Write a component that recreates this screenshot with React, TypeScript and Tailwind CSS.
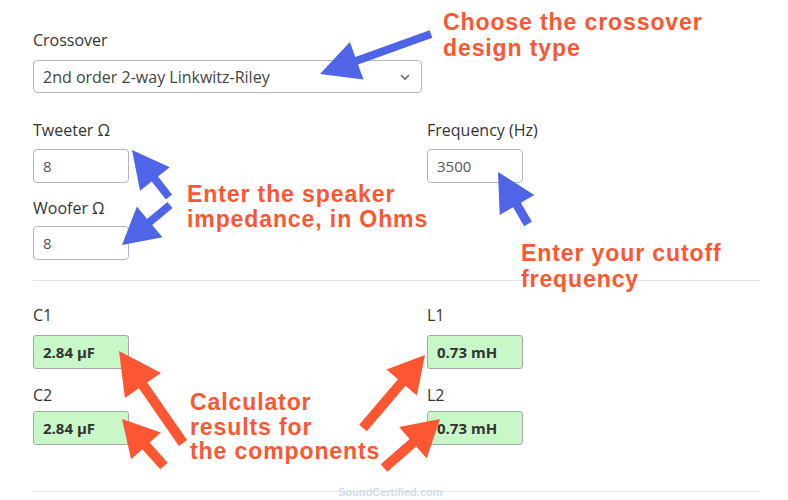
import React from 'react';

type Pt = [number, number];

// builds an arrow polygon from tail to tip
function arrowPoints(tail: Pt, tip: Pt, shaft: number, headLen: number, headW: number) {
  const dx = tip[0] - tail[0];
  const dy = tip[1] - tail[1];
  const len = Math.sqrt(dx * dx + dy * dy);
  const ux = dx / len;
  const uy = dy / len;
  const nx = -uy;
  const ny = ux;
  const bx = tip[0] - ux * headLen;
  const by = tip[1] - uy * headLen;
  const pts: Pt[] = [
    [tail[0] + (nx * shaft) / 2, tail[1] + (ny * shaft) / 2],
    [bx + (nx * shaft) / 2, by + (ny * shaft) / 2],
    [bx + (nx * headW) / 2, by + (ny * headW) / 2],
    tip,
    [bx - (nx * headW) / 2, by - (ny * headW) / 2],
    [bx - (nx * shaft) / 2, by - (ny * shaft) / 2],
    [tail[0] - (nx * shaft) / 2, tail[1] - (ny * shaft) / 2],
  ];
  return pts.map((p) => `${p[0].toFixed(1)},${p[1].toFixed(1)}`).join(' ');
}

const arrows = [
  { tail: [431, 34] as Pt, tip: [320, 74] as Pt, shaft: 8, head: 39, w: 40, color: '#4f64e6' },
  { tail: [169, 197] as Pt, tip: [132, 150] as Pt, shaft: 8, head: 37, w: 38, color: '#4f64e6' },
  { tail: [170, 205] as Pt, tip: [122, 245] as Pt, shaft: 8, head: 36, w: 40, color: '#4f64e6' },
  { tail: [528, 224] as Pt, tip: [498, 172] as Pt, shaft: 9, head: 38, w: 40, color: '#4f64e6' },
  { tail: [183, 443] as Pt, tip: [119, 351] as Pt, shaft: 10, head: 42, w: 44, color: '#fd5632' },
  { tail: [164, 466] as Pt, tip: [122, 419] as Pt, shaft: 10, head: 36, w: 40, color: '#fd5632' },
  { tail: [363, 428] as Pt, tip: [425, 355] as Pt, shaft: 10, head: 36, w: 40, color: '#fd5632' },
  { tail: [384, 468] as Pt, tip: [440, 419] as Pt, shaft: 10, head: 36, w: 42, color: '#fd5632' },
];

function Label({ children, className = '' }: { children: React.ReactNode; className?: string }) {
  return <div className={`text-[16px] leading-[20px] text-[#333] ${className}`}>{children}</div>;
}

function NumInput({ value }: { value: string }) {
  return (
    <div className="w-[96px] h-[34px] border border-[#b4b8bc] rounded-[4px] px-[9px] flex items-center text-[15px] text-[#555]">
      {value}
    </div>
  );
}

function Result({ value }: { value: string }) {
  return (
    <div className="w-[96px] h-[34px] border border-[#a5a9a5] rounded-[3px] bg-[#c8f7c8] px-[9px] flex items-center text-[15px] font-bold text-[#333]">
      {value}
    </div>
  );
}

export default function App() {
  return (
    <div className="relative w-[788px] h-[500px] bg-white overflow-hidden font-['Open_Sans',sans-serif]">
      <div className="pl-[33px] pr-[28px] pt-[30px]">
        {/* Crossover type */}
        <Label className="mb-[10px]">Crossover</Label>
        <div className="w-[389px] h-[33px] border border-[#b4b8bc] rounded-[4px] pl-[9px] pr-[10px] flex items-center justify-between text-[16px] text-[#444]">
          <span>2nd order 2-way Linkwitz-Riley</span>
          <svg width="12" height="8" viewBox="0 0 12 8" fill="none" stroke="#666" strokeWidth="1.6">
            <path d="M2 2l4 4 4-4" />
          </svg>
        </div>

        {/* Inputs */}
        <div className="grid grid-cols-[394px_1fr] mt-[27px]">
          <div>
            <Label className="mb-[9px]">Tweeter Ω</Label>
            <NumInput value="8" />
            <Label className="mt-[15px] mb-[8px]">Woofer Ω</Label>
            <NumInput value="8" />
          </div>
          <div>
            <Label className="mb-[9px]">Frequency (Hz)</Label>
            <NumInput value="3500" />
          </div>
        </div>

        <div className="h-px bg-[#e6e6e6] mt-[20px]" />

        {/* Results */}
        <div className="grid grid-cols-[394px_1fr] mt-[24px]">
          <div>
            <Label className="mb-[10px]">C1</Label>
            <Result value="2.84 μF" />
            <Label className="mt-[16px] mb-[6px]">C2</Label>
            <Result value="2.84 μF" />
          </div>
          <div>
            <Label className="mb-[10px]">L1</Label>
            <Result value="0.73 mH" />
            <Label className="mt-[16px] mb-[6px]">L2</Label>
            <Result value="0.73 mH" />
          </div>
        </div>

        <div className="h-px bg-[#e6e6e6] mt-[46px]" />
      </div>

      <div className="absolute left-[338px] top-[484px] text-[11px] font-bold text-[#d3dbe8] font-['Liberation_Sans',sans-serif]">
        SoundCertified.com
      </div>

      {/* Annotation overlay */}
      <svg className="absolute inset-0 pointer-events-none" width="788" height="500">
        {arrows.map((a, i) => (
          <polygon key={i} points={arrowPoints(a.tail, a.tip, a.shaft, a.head, a.w)} fill={a.color} />
        ))}
      </svg>

      <div className="absolute inset-0 pointer-events-none font-['Liberation_Sans',Arial,sans-serif] font-bold text-[23px] leading-[25px] tracking-[0.9px] text-[#fd5632]">
        <div className="absolute left-[443px] top-[9px] leading-[26px]">
          Choose the crossover
          <br />
          design type
        </div>
        <div className="absolute left-[187px] top-[182px]">
          Enter the speaker
          <br />
          impedance, in Ohms
        </div>
        <div className="absolute left-[521px] top-[240px] leading-[26px]">
          Enter your cutoff
          <br />
          frequency
        </div>
        <div className="absolute left-[190px] top-[390px] leading-[24.5px]">
          Calculator
          <br />
          results for
          <br />
          the components
        </div>
      </div>
    </div>
  );
}
